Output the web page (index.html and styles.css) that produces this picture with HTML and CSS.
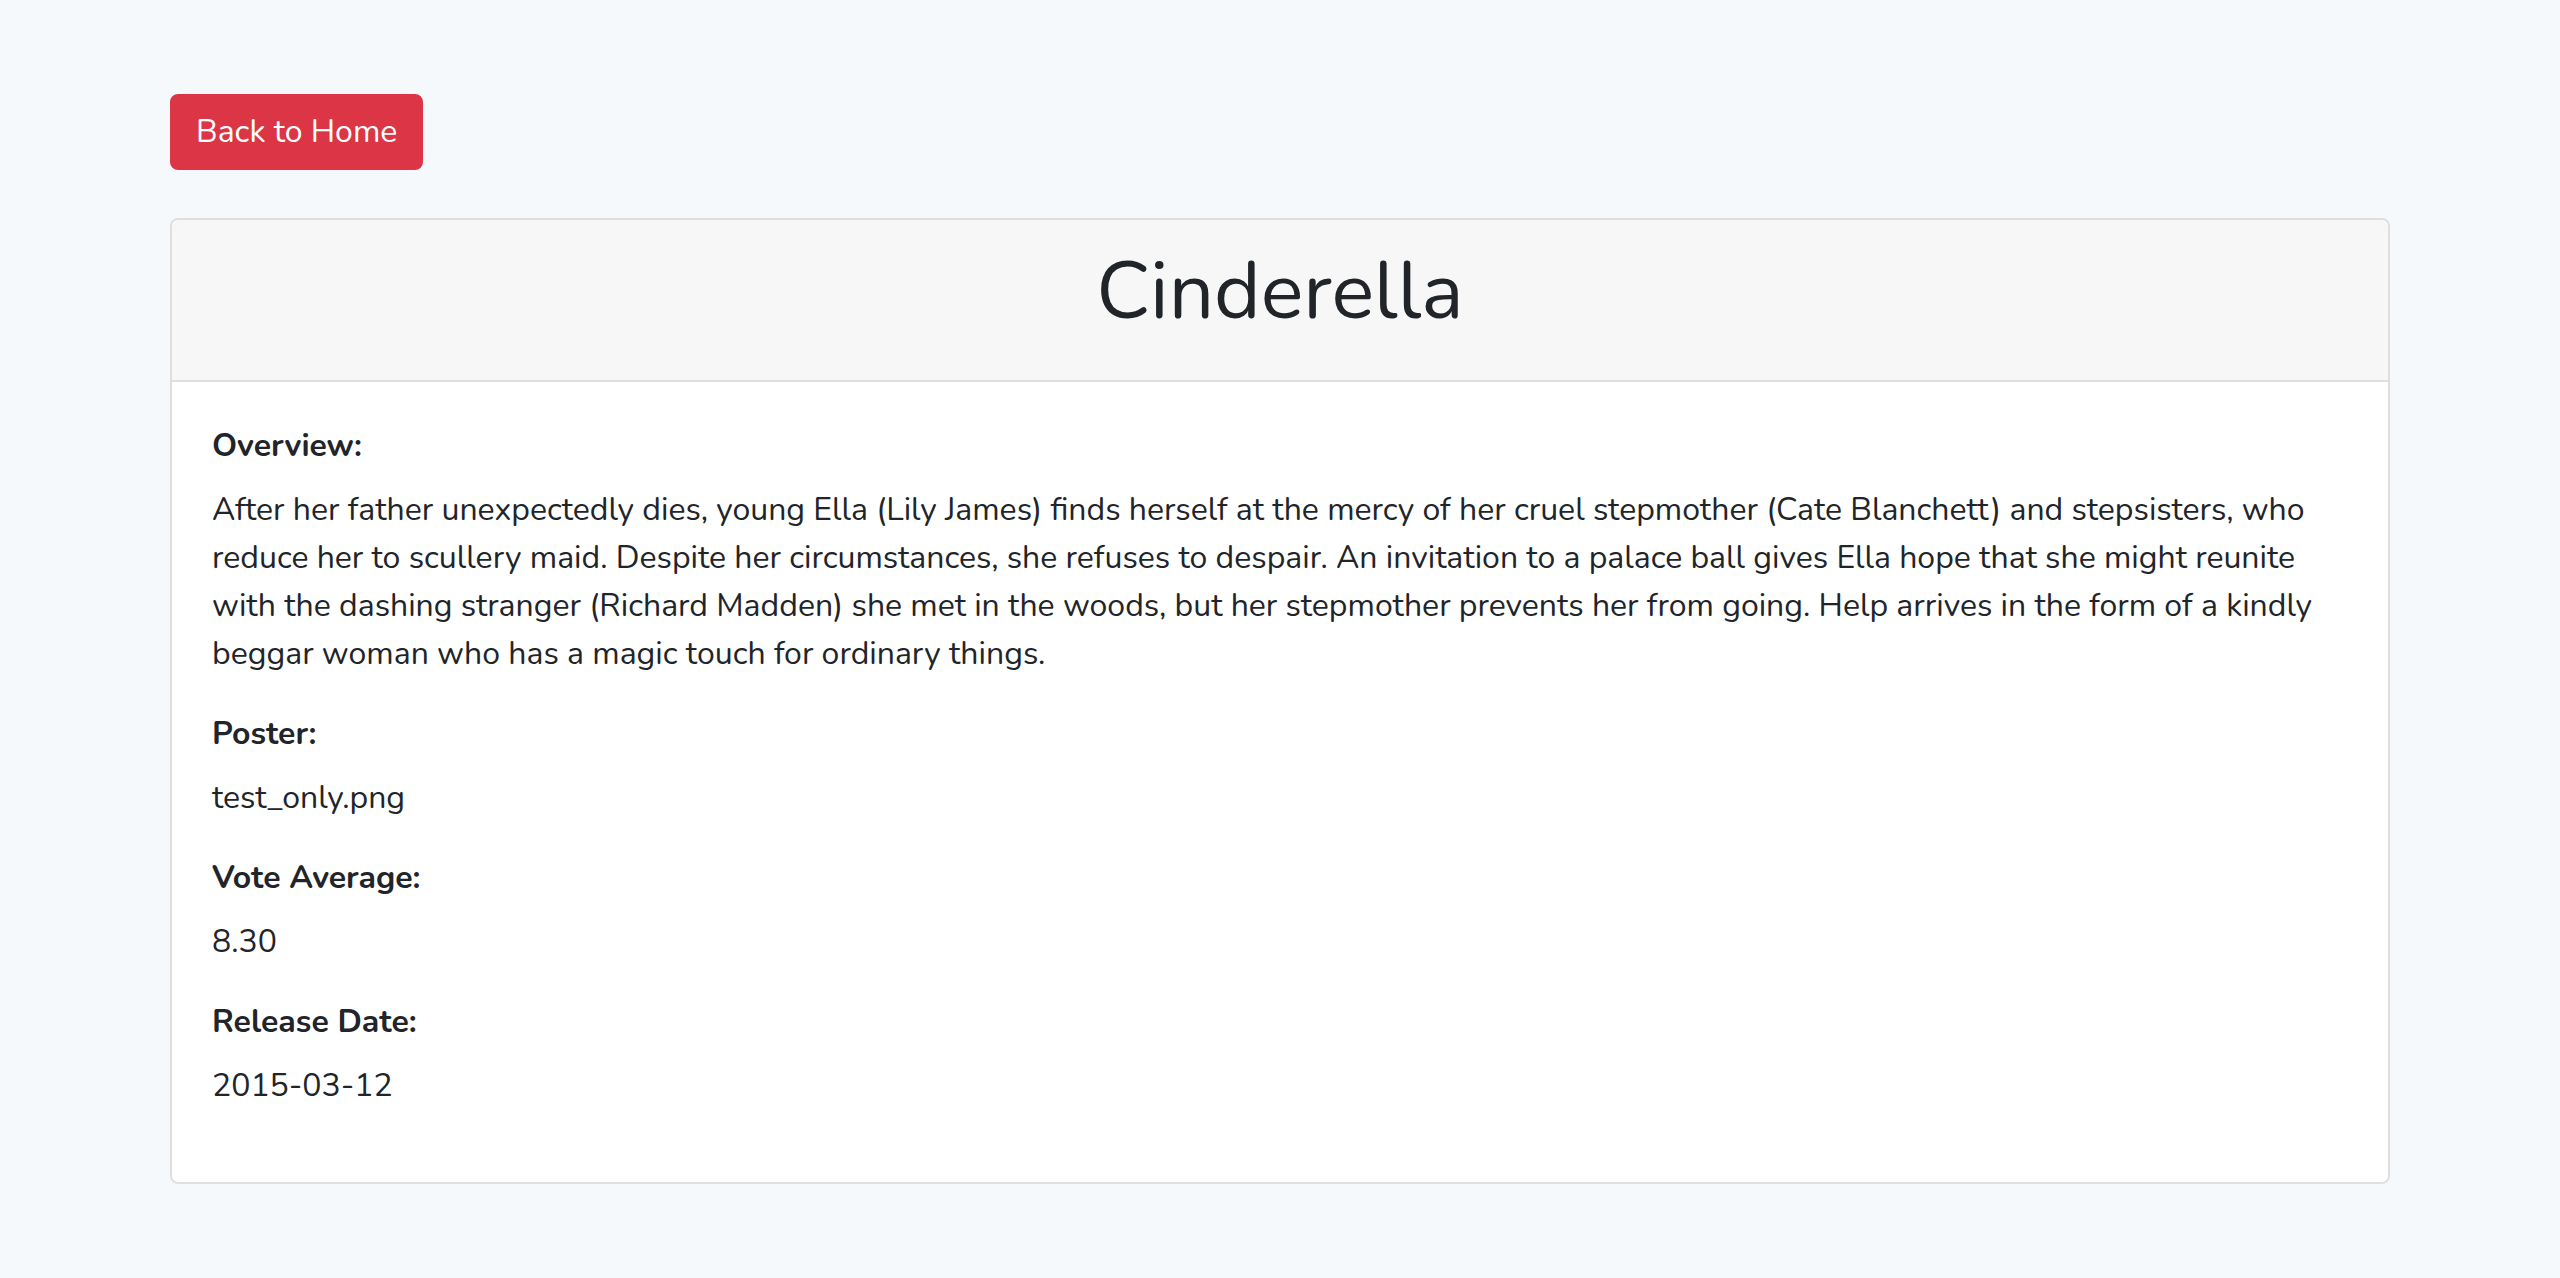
FILE: index.html
```html
<!DOCTYPE html>
<html lang="en">
<head>
<meta charset="utf-8">
<title>Cinderella</title>
<link rel="stylesheet" href="styles.css">
</head>
<body>
<main class="container">
  <a class="btn btn-danger" href="#">Back to Home</a>
  <section class="card">
    <header class="card-header">
      <h1 class="title">Cinderella</h1>
    </header>
    <div class="card-body">
      <p class="label">Overview:</p>
      <p class="value">After her father unexpectedly dies, young Ella (Lily James) finds herself at the mercy of her cruel stepmother (Cate Blanchett) and stepsisters, who reduce her to scullery maid. Despite her circumstances, she refuses to despair. An invitation to a palace ball gives Ella hope that she might reunite with the dashing stranger (Richard Madden) she met in the woods, but her stepmother prevents her from going. Help arrives in the form of a kindly beggar woman who has a magic touch for ordinary things.</p>
      <p class="label">Poster:</p>
      <p class="value">test_only.png</p>
      <p class="label">Vote Average:</p>
      <p class="value">8.30</p>
      <p class="label">Release Date:</p>
      <p class="value">2015-03-12</p>
    </div>
  </section>
</main>
</body>
</html>
```

FILE: styles.css
```css
* { box-sizing: border-box; }
html, body { margin: 0; padding: 0; }
body {
  background: #f6f9fc;
  color: #212529;
  font-family: "Nunito", "Lato", "Noto Sans", sans-serif;
  font-size: 32px;
  line-height: 48px;
}
.container {
  width: 2280px;
  margin: 0 auto;
  padding: 94px 30px 48px;
  display: flex;
  flex-direction: column;
  align-items: flex-start;
}
.btn {
  display: inline-block;
  font-size: 32px;
  line-height: 48px;
  padding: 12px 24px;
  border: 2px solid transparent;
  border-radius: 8px;
  text-decoration: none;
}
.btn-danger {
  background: #dc3545;
  border-color: #dc3545;
  color: #fff;
}
.card {
  margin-top: 48px;
  align-self: stretch;
  background: #fff;
  border: 2px solid #dfdfdf;
  border-radius: 8px;
  overflow: hidden;
}
.card-header {
  background: #f7f7f7;
  border-bottom: 2px solid #dfdfdf;
  padding: 24px 40px;
}
.title {
  margin: 0 0 16px;
  font-size: 80px;
  line-height: 96px;
  font-weight: 400;
  text-align: center;
}
.card-body {
  padding: 40px;
}
.label {
  margin: 0 0 16px;
  font-weight: 700;
}
.value {
  margin: 0 0 32px;
}
```
